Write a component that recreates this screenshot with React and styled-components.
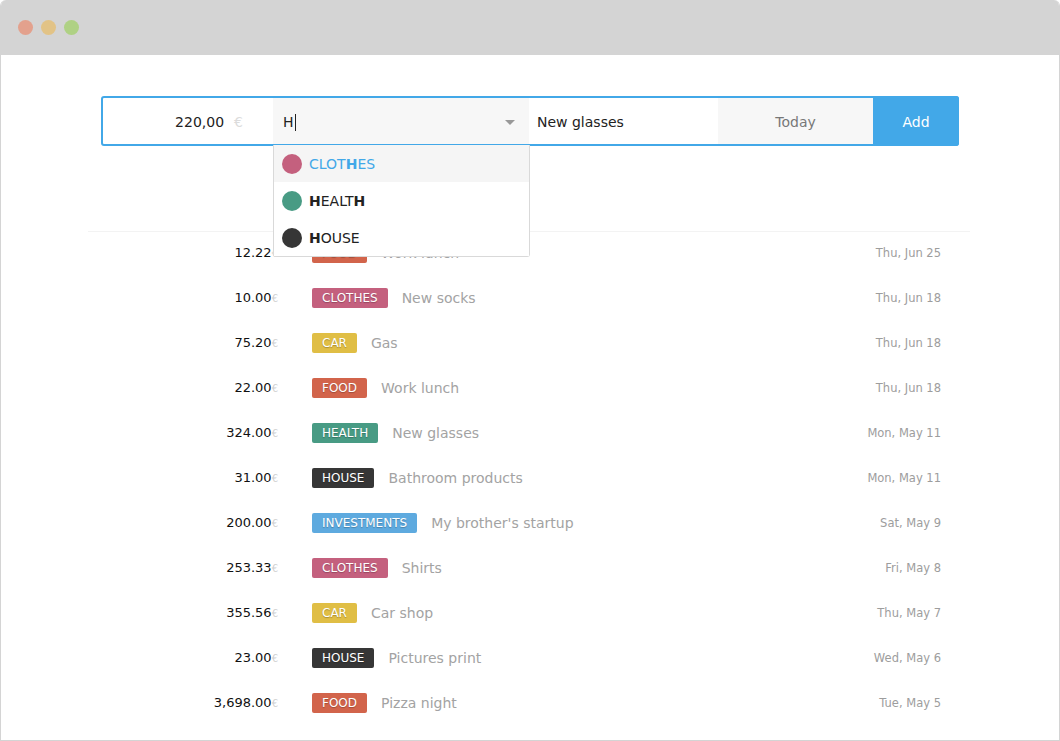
import React from 'react';
import styled, { createGlobalStyle } from 'styled-components';

const GlobalStyle = createGlobalStyle`
  body {
    margin: 0;
    background: #fff;
    font-family: 'DejaVu Sans', 'Open Sans', sans-serif;
  }
`;

const COLORS = {
  food: '#d2644b',
  clothes: '#c4607e',
  car: '#e0be45',
  health: '#489b84',
  house: '#363636',
  investments: '#5eaadf',
};

const Window = styled.div`
  width: 1060px;
  height: 741px;
  box-sizing: border-box;
  border: 1px solid #d4d4d4;
  border-top: none;
  border-radius: 6px 6px 0 0;
  overflow: hidden;
`;

const TitleBar = styled.div`
  height: 55px;
  background: #d4d4d4;
  display: flex;
  align-items: center;
  gap: 8px;
  padding-left: 17px;
`;

const Light = styled.span`
  width: 15px;
  height: 15px;
  border-radius: 50%;
  background: ${(p) => p.color};
`;

const Content = styled.div`
  padding-top: 41px;
`;

const Form = styled.div`
  margin: 0 100px;
  height: 50px;
  box-sizing: border-box;
  border: 2px solid #42a8e8;
  border-radius: 3px;
  display: flex;
  font-size: 14px;
  position: relative;
`;

const AmountCell = styled.div`
  width: 170px;
  display: flex;
  align-items: center;
  justify-content: flex-end;
  padding: 2px 30px 0 0;
  box-sizing: border-box;
  color: #222;
`;

const Currency = styled.span`
  color: #dcdcdc;
  margin-left: 10px;
`;

const CategoryCell = styled.div`
  width: 256px;
  background: #f7f7f7;
  display: flex;
  align-items: center;
  padding: 2px 14px 0 10px;
  box-sizing: border-box;
  color: #222;
  position: relative;
`;

const Caret = styled.span`
  width: 1px;
  height: 17px;
  background: #222;
  margin-left: 1px;
`;

const Arrow = styled.span`
  margin-left: auto;
  width: 0;
  height: 0;
  border-left: 5px solid transparent;
  border-right: 5px solid transparent;
  border-top: 5px solid #999;
`;

const DescCell = styled.div`
  width: 189px;
  display: flex;
  align-items: center;
  padding: 2px 0 0 8px;
  box-sizing: border-box;
  color: #222;
`;

const DateCell = styled.div`
  width: 155px;
  background: #f7f7f7;
  display: flex;
  align-items: center;
  justify-content: center;
  padding-top: 2px;
  box-sizing: border-box;
  color: #777;
`;

const AddButton = styled.div`
  flex: 1;
  margin: -2px -2px -2px 0;
  padding-top: 2px;
  border-radius: 0 3px 3px 0;
  background: #42a8e8;
  color: #fff;
  display: flex;
  align-items: center;
  justify-content: center;
`;

const Dropdown = styled.div`
  position: absolute;
  top: calc(100% + 1px);
  left: 0;
  width: 257px;
  box-sizing: border-box;
  background: #fff;
  border: 1px solid #d9d9d9;
  border-top: none;
  border-radius: 0 0 3px 3px;
  z-index: 2;
`;

const Option = styled.div`
  height: 37px;
  display: flex;
  align-items: center;
  gap: 7px;
  padding-left: 8px;
  background: ${(p) => (p.active ? '#f5f5f5' : '#fff')};
  color: ${(p) => (p.active ? '#42a8e8' : '#222')};
  font-size: 14px;

  b {
    font-weight: bold;
  }
`;

const Dot = styled.span`
  width: 20px;
  height: 20px;
  border-radius: 50%;
  background: ${(p) => p.color};
`;

const List = styled.div`
  margin: 85px 89px 0 87px;
  border-top: 1px solid #f3f3f3;
`;

const Row = styled.div`
  height: 45px;
  box-sizing: border-box;
  padding-bottom: 4px;
  display: flex;
  align-items: center;
`;

const Amount = styled.div`
  width: 190px;
  text-align: right;
  font-size: 13px;
  color: #111;
`;

const SmallEuro = styled.span`
  font-size: 10px;
  color: #cfcfcf;
`;

const Tag = styled.span`
  margin-left: 34px;
  height: 20px;
  line-height: 20px;
  padding: 0 10px;
  border-radius: 2px;
  background: ${(p) => p.color};
  color: #fff;
  font-size: 12px;
  text-transform: uppercase;
  text-shadow: 0 1px 1px rgba(0, 0, 0, 0.25);
`;

const Desc = styled.span`
  margin-left: 14px;
  font-size: 14px;
  color: #a3a3a3;
`;

const DateText = styled.span`
  margin-left: auto;
  padding-right: 29px;
  font-size: 11.5px;
  color: #9d9d9d;
`;

const expenses = [
  ['12.22', 'food', 'Work lunch', 'Thu, Jun 25'],
  ['10.00', 'clothes', 'New socks', 'Thu, Jun 18'],
  ['75.20', 'car', 'Gas', 'Thu, Jun 18'],
  ['22.00', 'food', 'Work lunch', 'Thu, Jun 18'],
  ['324.00', 'health', 'New glasses', 'Mon, May 11'],
  ['31.00', 'house', 'Bathroom products', 'Mon, May 11'],
  ['200.00', 'investments', "My brother's startup", 'Sat, May 9'],
  ['253.33', 'clothes', 'Shirts', 'Fri, May 8'],
  ['355.56', 'car', 'Car shop', 'Thu, May 7'],
  ['23.00', 'house', 'Pictures print', 'Wed, May 6'],
  ['3,698.00', 'food', 'Pizza night', 'Tue, May 5'],
];

const App = () => {
  return (
    <>
      <GlobalStyle />
      <Window>
        <TitleBar>
          <Light color="#e3a18d" />
          <Light color="#e2c386" />
          <Light color="#afd184" />
        </TitleBar>
        <Content>
          <Form>
            <AmountCell>
              220,00<Currency>€</Currency>
            </AmountCell>
            <CategoryCell>
              H<Caret />
              <Arrow />
              <Dropdown>
                <Option active>
                  <Dot color={COLORS.clothes} />
                  <span>CLOT<b>H</b>ES</span>
                </Option>
                <Option>
                  <Dot color={COLORS.health} />
                  <span><b>H</b>EALT<b>H</b></span>
                </Option>
                <Option>
                  <Dot color={COLORS.house} />
                  <span><b>H</b>OUSE</span>
                </Option>
              </Dropdown>
            </CategoryCell>
            <DescCell>New glasses</DescCell>
            <DateCell>Today</DateCell>
            <AddButton>Add</AddButton>
          </Form>
          <List>
            {expenses.map(([amount, cat, desc, date], i) => (
              <Row key={i}>
                <Amount>
                  {amount}
                  <SmallEuro>€</SmallEuro>
                </Amount>
                <Tag color={COLORS[cat]}>{cat}</Tag>
                <Desc>{desc}</Desc>
                <DateText>{date}</DateText>
              </Row>
            ))}
          </List>
        </Content>
      </Window>
    </>
  );
};

export default App;
